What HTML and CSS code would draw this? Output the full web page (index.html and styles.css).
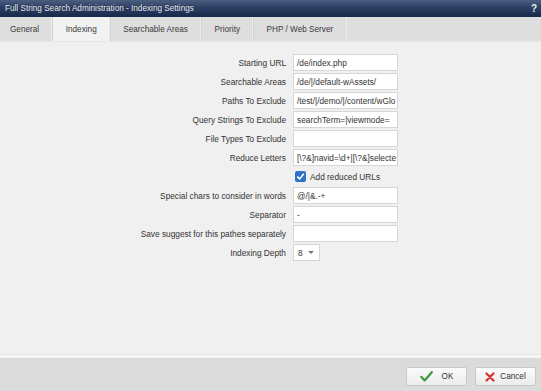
FILE: index.html
```html
<!DOCTYPE html>
<html>
<head>
<meta charset="utf-8">
<link rel="stylesheet" href="styles.css">
</head>
<body>
<div class="window">
  <div class="titlebar">
    <span class="title">Full String Search Administration - Indexing Settings</span>
    <span class="help">?</span>
  </div>
  <div class="tabs">
    <div class="tab">General</div>
    <div class="tab active">Indexing</div>
    <div class="tab">Searchable Areas</div>
    <div class="tab">Priority</div>
    <div class="tab">PHP / Web Server</div>
  </div>
  <div class="content">
    <div class="form">
      <label class="lbl">Starting URL</label>
      <div class="field">/de/index.php</div>
      <label class="lbl">Searchable Areas</label>
      <div class="field">/de/|/default-wAssets/</div>
      <label class="lbl">Paths To Exclude</label>
      <div class="field">/test/|/demo/|/content/wGlo</div>
      <label class="lbl">Query Strings To Exclude</label>
      <div class="field">searchTerm=|viewmode=</div>
      <label class="lbl">File Types To Exclude</label>
      <div class="field"></div>
      <label class="lbl">Reduce Letters</label>
      <div class="field">[\?&amp;]navid=\d+|[\?&amp;]selecte</div>
      <span class="lbl"></span>
      <div class="check-row">
        <span class="checkbox"><svg width="9" height="9" viewBox="0 0 9 9"><path d="M1.3 4.6 L3.6 6.9 L7.8 1.8" fill="none" stroke="#fff" stroke-width="1.6"/></svg></span>
        <span class="check-label">Add reduced URLs</span>
      </div>
      <label class="lbl">Special chars to consider in words</label>
      <div class="field">@/|&amp;.-+</div>
      <label class="lbl">Separator</label>
      <div class="field">-</div>
      <label class="lbl">Save suggest for this pathes separately</label>
      <div class="field"></div>
      <label class="lbl">Indexing Depth</label>
      <div class="select"><span>8</span><span class="arrow"></span></div>
    </div>
  </div>
  <div class="divider"></div>
  <div class="footer">
    <div class="btn">
      <svg width="13" height="11" viewBox="0 0 13 11"><path d="M1.2 5.8 L4.6 9.4 L11.8 1.2" fill="none" stroke="#3c9a3c" stroke-width="2.2" stroke-linecap="round" stroke-linejoin="round"/></svg>
      <span class="btn-text">OK</span>
    </div>
    <div class="btn">
      <svg width="10" height="10" viewBox="0 0 10 10"><path d="M1.5 1.5 L8.5 8.5 M8.5 1.5 L1.5 8.5" fill="none" stroke="#d9302c" stroke-width="2.2" stroke-linecap="round"/></svg>
      <span class="btn-text">Cancel</span>
    </div>
  </div>
</div>
</body>
</html>
```
FILE: styles.css
```css
html, body {
  margin: 0;
  padding: 0;
}
body {
  width: 541px;
  height: 391px;
  overflow: hidden;
  font-family: "Liberation Sans", Arial, sans-serif;
  font-size: 8.3px;
  color: #333;
  background: #f0f0f0;
}
.window {
  display: flex;
  flex-direction: column;
  height: 391px;
}
.titlebar {
  height: 17px;
  flex: none;
  display: flex;
  align-items: center;
  justify-content: space-between;
  padding: 0 4px 0 5px;
  background: linear-gradient(to bottom, #4c5f82 0%, #2c3f63 45%, #17284a 100%);
}
.title {
  color: #eef1f6;
  font-size: 8.2px;
  text-shadow: 0 0 1px #0b1530;
}
.help {
  color: #e8ecf3;
  font-weight: bold;
  font-size: 10px;
}
.tabs {
  height: 25px;
  flex: none;
  display: flex;
  background: #dedede;
  border-bottom: 1px solid #e6e6e6;
  box-sizing: border-box;
}
.tab {
  display: flex;
  align-items: center;
  padding: 0 12.3px;
  font-size: 8.2px;
  color: #3a3a3a;
  border-right: 1px solid #ececec;
  border-left: 1px solid #d2d2d2;
}
.tab:first-child {
  border-left: none;
  padding-left: 10px;
}
.tab.active {
  background: #f2f2f2;
}
.content {
  flex: 1;
  background: #f0f0f0;
  padding-top: 12px;
}
.form {
  display: grid;
  grid-template-columns: 286px 105px;
  grid-auto-rows: 17px;
  column-gap: 7px;
  row-gap: 2px;
}
.lbl {
  display: flex;
  align-items: center;
  justify-content: flex-end;
  color: #333;
  white-space: nowrap;
}
.field {
  background: #fff;
  border: 1px solid #d6d6d6;
  box-sizing: border-box;
  padding: 0 3px;
  display: flex;
  align-items: center;
  white-space: nowrap;
  overflow: hidden;
  color: #333;
}
.check-row {
  display: flex;
  align-items: center;
  gap: 4px;
  padding-left: 2px;
}
.checkbox {
  width: 11px;
  height: 11px;
  border-radius: 2px;
  background: #2e70c6;
  display: flex;
  align-items: center;
  justify-content: center;
}
.check-label {
  color: #333;
}
.select {
  width: 27px;
  background: #fff;
  border: 1px solid #d6d6d6;
  box-sizing: border-box;
  display: flex;
  align-items: center;
  justify-content: space-between;
  padding: 0 5px 0 4px;
}
.arrow {
  width: 0;
  height: 0;
  border-left: 3px solid transparent;
  border-right: 3px solid transparent;
  border-top: 3px solid #777;
}
.divider {
  height: 4px;
  flex: none;
  background: #f5f5f5;
  border-top: 1px solid #e6e6e6;
  box-sizing: border-box;
}
.footer {
  height: 33px;
  flex: none;
  background: #dbdbdb;
  display: flex;
  justify-content: flex-end;
  align-items: flex-start;
  gap: 8px;
  padding: 9px 5px 0 0;
  box-sizing: border-box;
}
.btn {
  width: 61px;
  height: 19px;
  box-sizing: border-box;
  border: 1px solid #c9c9c9;
  border-radius: 2px;
  background: linear-gradient(to bottom, #fbfbfb, #ececec);
  display: flex;
  align-items: center;
  justify-content: center;
  gap: 9px;
  font-size: 8.2px;
  color: #333;
}
.btn:last-child {
  gap: 5px;
}
```
